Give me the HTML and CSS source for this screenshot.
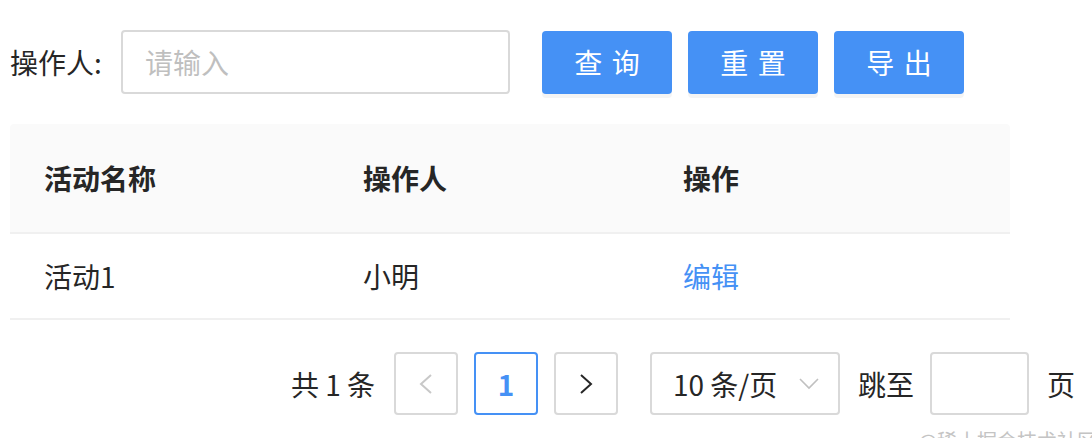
FILE: index.html
```html
<!DOCTYPE html>
<html lang="zh-CN">
<head>
<meta charset="utf-8">
<title>活动列表</title>
<link rel="stylesheet" href="styles.css">
</head>
<body>
<div class="page">
  <div class="search">
    <label class="search-label">操作人:</label>
    <input class="search-input" type="text" placeholder="请输入">
    <div class="btns">
      <button class="btn"><span>查询</span></button>
      <button class="btn"><span>重置</span></button>
      <button class="btn"><span>导出</span></button>
    </div>
  </div>

  <div class="table">
    <div class="tr thead">
      <div class="td c1">活动名称</div>
      <div class="td c2">操作人</div>
      <div class="td c3">操作</div>
    </div>
    <div class="tr tbody">
      <div class="td c1">活动1</div>
      <div class="td c2">小明</div>
      <div class="td c3"><a class="link">编辑</a></div>
    </div>
  </div>

  <div class="pager">
    <span class="total">共 1 条</span>
    <span class="item arrow disabled">
      <svg width="16" height="20" viewBox="0 0 16 20"><path d="M13 1 L3 10 L13 19" fill="none" stroke="currentColor" stroke-width="2"/></svg>
    </span>
    <span class="item active">1</span>
    <span class="item arrow">
      <svg width="16" height="20" viewBox="0 0 16 20"><path d="M3 1 L13 10 L3 19" fill="none" stroke="currentColor" stroke-width="2"/></svg>
    </span>
    <span class="size-select">
      <span class="size-text">10 条/页</span>
      <svg class="caret" width="20" height="12" viewBox="0 0 20 12"><path d="M1 1 L10 10 L19 1" fill="none" stroke="currentColor" stroke-width="1.6"/></svg>
    </span>
    <span class="jump">跳至</span>
    <input class="jump-input" type="text">
    <span class="jump-unit">页</span>
  </div>
</div>
<div class="watermark">@稀土掘金技术社区</div>
</body>
</html>
```

FILE: styles.css
```css
html, body {
  margin: 0;
  padding: 0;
  background: #fff;
  overflow: hidden;
}
body {
  font-family: "Noto Sans CJK SC", "Noto Sans", sans-serif;
  color: #262626;
  font-size: 28px;
  width: 1092px;
  height: 438px;
  position: relative;
}
.page {
  padding: 30px 0 0 10px;
}
.search {
  display: flex;
  align-items: center;
  height: 64px;
}
.search-label {
  font-size: 28px;
  line-height: 64px;
  width: 111px;
  color: #262626;
}
.search-input {
  box-sizing: border-box;
  width: 389px;
  height: 64px;
  border: 2px solid #d9d9d9;
  border-radius: 4px;
  padding: 0 22px;
  font-family: inherit;
  font-size: 28px;
  outline: none;
  color: #262626;
}
.search-input::placeholder {
  color: #bfbfbf;
}
.btns {
  display: flex;
  gap: 16px;
  margin-left: 32px;
}
.btn {
  box-sizing: border-box;
  width: 130px;
  height: 63px;
  border: none;
  border-radius: 4px;
  background: #4591f5;
  color: #fff;
  font-family: inherit;
  font-size: 28px;
  padding: 0;
  box-shadow: 0 4px 0 rgba(0, 0, 0, 0.045);
  cursor: pointer;
}
.btn span {
  letter-spacing: 0.34em;
  margin-right: -0.34em;
}
.table {
  margin-top: 30px;
  width: 1000px;
}
.tr {
  display: flex;
  align-items: center;
  border-bottom: 2px solid #f0f0f0;
}
.thead {
  height: 108px;
  background: #fafafa;
  border-radius: 4px 4px 0 0;
  font-weight: 700;
}
.tbody {
  height: 84px;
}
.td {
  box-sizing: border-box;
  padding-left: 34px;
}
.c1 { width: 319px; }
.c2 { width: 320px; }
.c3 { flex: 1; }
.link {
  color: #4591f5;
  cursor: pointer;
}
.pager {
  display: flex;
  align-items: center;
  margin-top: 32px;
  margin-left: 281px;
  height: 63px;
}
.total {
  width: 85px;
  margin-right: 18px;
  white-space: pre;
}
.item {
  box-sizing: border-box;
  width: 64px;
  height: 63px;
  border: 2px solid #d9d9d9;
  border-radius: 4px;
  display: flex;
  align-items: center;
  justify-content: center;
  margin-right: 16px;
  color: #262626;
}
.item.disabled {
  color: #c8c8c8;
}
.item.active {
  border-color: #4591f5;
  color: #4591f5;
  font-weight: 700;
}
.size-select {
  box-sizing: border-box;
  width: 190px;
  height: 63px;
  border: 2px solid #d9d9d9;
  border-radius: 4px;
  display: flex;
  align-items: center;
  padding-left: 21px;
  margin-left: 16px;
  margin-right: 18px;
}
.size-text {
  width: 126px;
}
.caret {
  color: #c0c0c0;
}
.jump {
  margin-right: 16px;
}
.jump-input {
  box-sizing: border-box;
  width: 99px;
  height: 63px;
  border: 2px solid #d9d9d9;
  border-radius: 4px;
  margin: 0 18px 0 0;
  outline: none;
}
.watermark {
  position: absolute;
  left: 918px;
  top: 426px;
  font-size: 20px;
  color: #c4c4c4;
  white-space: nowrap;
}
```
